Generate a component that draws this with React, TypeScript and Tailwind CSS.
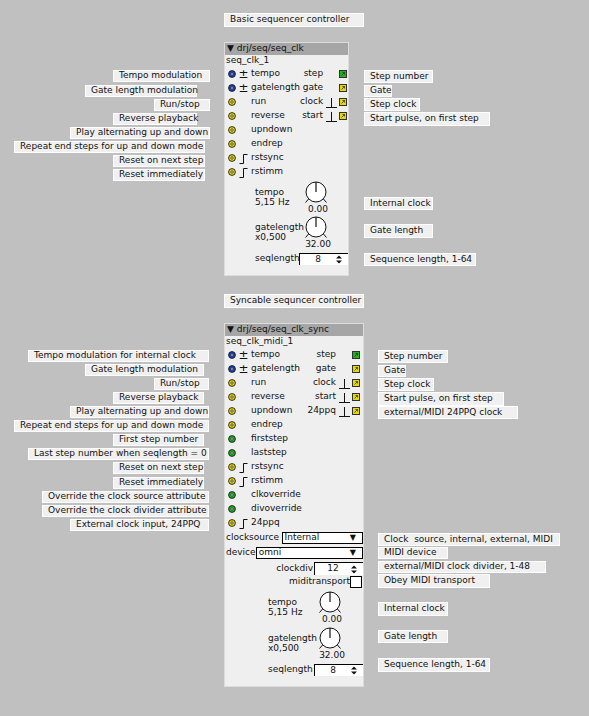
import React from "react";

type Kind = "frac" | "bool" | "int";

const fill: Record<Kind, string> = {
  frac: "#1d3fbf",
  bool: "#e8d800",
  int: "#1fb31f",
};

type Note = { text: string; pos: string };

const notes: Note[] = [
  { text: "Basic sequencer controller", pos: "left-[224px] top-[13px] w-[140px] h-[14px]" },
  { text: "Tempo modulation", pos: "left-[113px] top-[70px] w-[97px] h-[12px]" },
  { text: "Gate length modulation", pos: "left-[85px] top-[85px] w-[112px] h-[12px]" },
  { text: "Run/stop", pos: "left-[154px] top-[99px] w-[56px] h-[12px]" },
  { text: "Reverse playback", pos: "left-[113px] top-[113px] w-[84px] h-[12px]" },
  { text: "Play alternating up and down", pos: "left-[70px] top-[127px] w-[140px] h-[12px]" },
  { text: "Repeat end steps for up and down mode", pos: "left-[14px] top-[141px] w-[191px] h-[12px]" },
  { text: "Reset on next step", pos: "left-[113px] top-[155px] w-[92px] h-[12px]" },
  { text: "Reset immediately", pos: "left-[113px] top-[169px] w-[92px] h-[12px]" },
  { text: "Step number", pos: "left-[364px] top-[70px] w-[69px] h-[13px]" },
  { text: "Gate", pos: "left-[364px] top-[85px] w-[28px] h-[12px]" },
  { text: "Step clock", pos: "left-[364px] top-[98px] w-[56px] h-[13px]" },
  { text: "Start pulse, on first step", pos: "left-[364px] top-[112px] w-[126px] h-[14px]" },
  { text: "Internal clock", pos: "left-[364px] top-[197px] w-[69px] h-[13px]" },
  { text: "Gate length", pos: "left-[364px] top-[224px] w-[69px] h-[14px]" },
  { text: "Sequence length, 1-64", pos: "left-[364px] top-[253px] w-[112px] h-[13px]" },

  { text: "Syncable sequncer controller", pos: "left-[224px] top-[294px] w-[140px] h-[14px]" },
  { text: "Tempo modulation for internal clock", pos: "left-[28px] top-[350px] w-[181px] h-[12px]" },
  { text: "Gate length modulation", pos: "left-[85px] top-[364px] w-[119px] h-[12px]" },
  { text: "Run/stop", pos: "left-[154px] top-[378px] w-[55px] h-[12px]" },
  { text: "Reverse playback", pos: "left-[113px] top-[392px] w-[91px] h-[12px]" },
  { text: "Play alternating up and down", pos: "left-[70px] top-[406px] w-[139px] h-[12px]" },
  { text: "Repeat end steps for up and down mode", pos: "left-[14px] top-[420px] w-[195px] h-[12px]" },
  { text: "First step number", pos: "left-[113px] top-[434px] w-[91px] h-[12px]" },
  { text: "Last step number when seqlength = 0", pos: "left-[28px] top-[448px] w-[181px] h-[12px]" },
  { text: "Reset on next step", pos: "left-[113px] top-[462px] w-[91px] h-[12px]" },
  { text: "Reset immediately", pos: "left-[113px] top-[477px] w-[91px] h-[12px]" },
  { text: "Override the clock source attribute", pos: "left-[42px] top-[491px] w-[167px] h-[12px]" },
  { text: "Override the clock divider attribute", pos: "left-[42px] top-[505px] w-[167px] h-[12px]" },
  { text: "External clock input, 24PPQ", pos: "left-[70px] top-[519px] w-[139px] h-[12px]" },
  { text: "Step number", pos: "left-[378px] top-[350px] w-[70px] h-[13px]" },
  { text: "Gate", pos: "left-[378px] top-[365px] w-[28px] h-[12px]" },
  { text: "Step clock", pos: "left-[378px] top-[378px] w-[56px] h-[13px]" },
  { text: "Start pulse, on first step", pos: "left-[378px] top-[392px] w-[126px] h-[14px]" },
  { text: "external/MIDI 24PPQ clock", pos: "left-[378px] top-[406px] w-[140px] h-[13px]" },
  { text: "Clock  source, internal, external, MIDI", pos: "left-[378px] top-[533px] w-[182px] h-[13px]" },
  { text: "MIDI device", pos: "left-[378px] top-[547px] w-[70px] h-[12px]" },
  { text: "external/MIDI clock divider, 1-48", pos: "left-[378px] top-[561px] w-[168px] h-[12px]" },
  { text: "Obey MIDI transport", pos: "left-[378px] top-[574px] w-[112px] h-[14px]" },
  { text: "Internal clock", pos: "left-[378px] top-[602px] w-[70px] h-[14px]" },
  { text: "Gate length", pos: "left-[378px] top-[630px] w-[70px] h-[13px]" },
  { text: "Sequence length, 1-64", pos: "left-[378px] top-[658px] w-[112px] h-[14px]" },
];

type In = { name: string; kind: Kind; mark?: "pm" | "trig" };
type Out = { name: string; kind: Kind; trig?: boolean };

const ins1: In[] = [
  { name: "tempo", kind: "frac", mark: "pm" },
  { name: "gatelength", kind: "frac", mark: "pm" },
  { name: "run", kind: "bool" },
  { name: "reverse", kind: "bool" },
  { name: "upndown", kind: "bool" },
  { name: "endrep", kind: "bool" },
  { name: "rstsync", kind: "bool", mark: "trig" },
  { name: "rstimm", kind: "bool", mark: "trig" },
];

const ins2: In[] = [
  { name: "tempo", kind: "frac", mark: "pm" },
  { name: "gatelength", kind: "frac", mark: "pm" },
  { name: "run", kind: "bool" },
  { name: "reverse", kind: "bool" },
  { name: "upndown", kind: "bool" },
  { name: "endrep", kind: "bool" },
  { name: "firststep", kind: "int" },
  { name: "laststep", kind: "int" },
  { name: "rstsync", kind: "bool", mark: "trig" },
  { name: "rstimm", kind: "bool", mark: "trig" },
  { name: "clkoverride", kind: "int" },
  { name: "divoverride", kind: "int" },
  { name: "24ppq", kind: "bool", mark: "trig" },
];

const outs1: Out[] = [
  { name: "step", kind: "int" },
  { name: "gate", kind: "bool" },
  { name: "clock", kind: "bool", trig: true },
  { name: "start", kind: "bool", trig: true },
];

const outs2: Out[] = [...outs1, { name: "24ppq", kind: "bool", trig: true }];

function InletDot({ kind }: { kind: Kind }) {
  return (
    <svg width="8" height="8" viewBox="0 0 8 8" className="shrink-0">
      <circle cx="4" cy="4" r="3.4" fill={fill[kind]} stroke="#1a1a1a" strokeWidth="0.9" />
      <circle cx="4" cy="4" r="1.2" fill="#f2f2f2" stroke="#1a1a1a" strokeWidth="0.7" />
    </svg>
  );
}

function OutletBox({ kind }: { kind: Kind }) {
  return (
    <svg width="8" height="8" viewBox="0 0 8 8" className="shrink-0">
      <rect x="0.5" y="0.5" width="7" height="7" fill={fill[kind]} stroke="#303030" strokeWidth="1" />
      <path d="M2.5 5.5 L5.5 2.5 M3.5 2.5 H5.5 V4.5" fill="none" stroke="#303030" strokeWidth="0.8" />
    </svg>
  );
}

function TrigIn() {
  return (
    <svg width="9" height="11" viewBox="0 0 9 11">
      <path d="M0.5 10.5 H4.5 V1.5 H8.5" fill="none" stroke="#111" strokeWidth="1" />
    </svg>
  );
}

function TrigOut() {
  return (
    <svg width="11" height="11" viewBox="0 0 11 11">
      <path d="M0 10.5 H11 M5.5 10.5 V1" fill="none" stroke="#111" strokeWidth="1" />
    </svg>
  );
}

function InletRow({ item }: { item: In }) {
  return (
    <div className="flex h-[14px] items-center pl-[3px]">
      <InletDot kind={item.kind} />
      <span className="flex w-[15px] items-center justify-center">
        {item.mark === "pm" && <span className="text-[12px] leading-none">±</span>}
        {item.mark === "trig" && <TrigIn />}
      </span>
      <span>{item.name}</span>
    </div>
  );
}

function OutletRow({ item }: { item: Out }) {
  return (
    <div className="flex h-[14px] items-center justify-end pr-[3px]">
      <span>{item.name}</span>
      <span className="flex w-[16px] items-center justify-center">{item.trig && <TrigOut />}</span>
      <OutletBox kind={item.kind} />
    </div>
  );
}

function Knob() {
  return (
    <svg width="26" height="23" viewBox="0 0 26 23">
      <path d="M6 17.5 L2.5 21.5 M20 17.5 L23.5 21.5" stroke="#111" strokeWidth="1" fill="none" />
      <circle cx="13" cy="11" r="10" fill="#fff" stroke="#111" strokeWidth="1" />
      <path d="M13 11 V1" stroke="#111" strokeWidth="1.2" />
    </svg>
  );
}

function KnobParam({ label, sub, value, pad, labelW, h }: { label: string; sub: string; value: string; pad: string; labelW: string; h: string }) {
  return (
    <div className={`flex ${h} ${pad}`}>
      <div className={`${labelW} pt-[6px] leading-[10px]`}>
        <div>{label}</div>
        <div>{sub}</div>
      </div>
      <div className="flex w-[26px] flex-col items-center">
        <Knob />
        <span className="whitespace-nowrap pl-[4px] leading-[10px]">{value}</span>
      </div>
    </div>
  );
}

function UpDown() {
  return (
    <svg width="6" height="9" viewBox="0 0 6 9">
      <path d="M0 3.5 L3 0.5 L6 3.5 Z M0 5.5 L3 8.5 L6 5.5 Z" fill="#111" />
    </svg>
  );
}

function Spinner({ value }: { value: string }) {
  return (
    <div className="flex h-full w-[49px] items-center border-l border-t border-black bg-white">
      <span className="w-[36px] text-center">{value}</span>
      <UpDown />
    </div>
  );
}

function Dropdown({ value, w }: { value: string; w: string }) {
  return (
    <div className={`flex h-full ${w} items-center justify-between border border-black bg-white pl-[2px] pr-[6px]`}>
      <span>{value}</span>
      <span className="text-[8px]">▼</span>
    </div>
  );
}

function Header({ title, instance }: { title: string; instance: string }) {
  return (
    <>
      <div className="flex h-[12px] items-center bg-[#a6a6a6] pl-[2px]">▼ {title}</div>
      <div className="flex h-[12px] items-center pl-[1px]">{instance}</div>
    </>
  );
}

function BasicObject() {
  return (
    <div className="absolute left-[224px] top-[42px] flex w-[125px] flex-col border border-[#dcdcdc] bg-[#efefef] pb-[10px]">
      <Header title="drj/seq/seq_clk" instance="seq_clk_1" />
      <div className="flex justify-between">
        <div className="flex flex-col">
          {ins1.map((i) => (
            <InletRow key={i.name} item={i} />
          ))}
        </div>
        <div className="flex flex-col">
          {outs1.map((o) => (
            <OutletRow key={o.name} item={o} />
          ))}
        </div>
      </div>
      <div className="mt-[2px]">
        <KnobParam label="tempo" sub="5,15 Hz" value="0.00" pad="pl-[30px]" labelW="w-[48px]" h="h-[35px]" />
        <KnobParam label="gatelength" sub="x0,500" value="32.00" pad="pl-[30px]" labelW="w-[48px]" h="h-[35px]" />
      </div>
      <div className="mt-[2px] flex h-[12px] items-center pl-[30px]">
        <span className="w-[44px]">seqlength</span>
        <Spinner value="8" />
      </div>
    </div>
  );
}

function SyncObject() {
  return (
    <div className="absolute left-[224px] top-[323px] flex w-[140px] flex-col border border-[#dcdcdc] bg-[#efefef] pb-[10px]">
      <Header title="drj/seq/seq_clk_sync" instance="seq_clk_midi_1" />
      <div className="flex justify-between">
        <div className="flex flex-col">
          {ins2.map((i) => (
            <InletRow key={i.name} item={i} />
          ))}
        </div>
        <div className="flex flex-col">
          {outs2.map((o) => (
            <OutletRow key={o.name} item={o} />
          ))}
        </div>
      </div>
      <div className="mt-[2px] flex h-[12px] items-center pl-[1px]">
        <span className="w-[56px]">clocksource</span>
        <Dropdown value="Internal" w="w-[82px]" />
      </div>
      <div className="mt-[3px] flex h-[12px] items-center pl-[1px]">
        <span className="w-[30px]">device</span>
        <Dropdown value="omni" w="w-[108px]" />
      </div>
      <div className="mt-[3px] flex h-[13px] items-center justify-end">
        <span className="pr-[1px]">clockdiv</span>
        <Spinner value="12" />
      </div>
      <div className="mt-[1px] flex h-[12px] items-center justify-end pr-[1px]">
        <span>miditransport</span>
        <span className="h-[12px] w-[12px] border border-black bg-white" />
      </div>
      <div className="mt-[3px]">
        <KnobParam label="tempo" sub="5,15 Hz" value="0.00" pad="pl-[43px]" labelW="w-[49px]" h="h-[36px]" />
        <KnobParam label="gatelength" sub="x0,500" value="32.00" pad="pl-[43px]" labelW="w-[49px]" h="h-[35px]" />
      </div>
      <div className="mt-[2px] flex h-[12px] items-center pl-[43px]">
        <span className="w-[46px]">seqlength</span>
        <Spinner value="8" />
      </div>
    </div>
  );
}

export default function App() {
  return (
    <div className="relative h-[716px] w-[589px] overflow-hidden bg-[#c0c0c0] font-['DejaVu_Sans',sans-serif] text-[9px] text-[#111]">
      {notes.map((n, i) => (
        <div
          key={i}
          className={`absolute flex items-center whitespace-pre border border-white bg-[#f0f0f0] pl-[5px] ${n.pos}`}
        >
          {n.text}
        </div>
      ))}
      <BasicObject />
      <SyncObject />
    </div>
  );
}
